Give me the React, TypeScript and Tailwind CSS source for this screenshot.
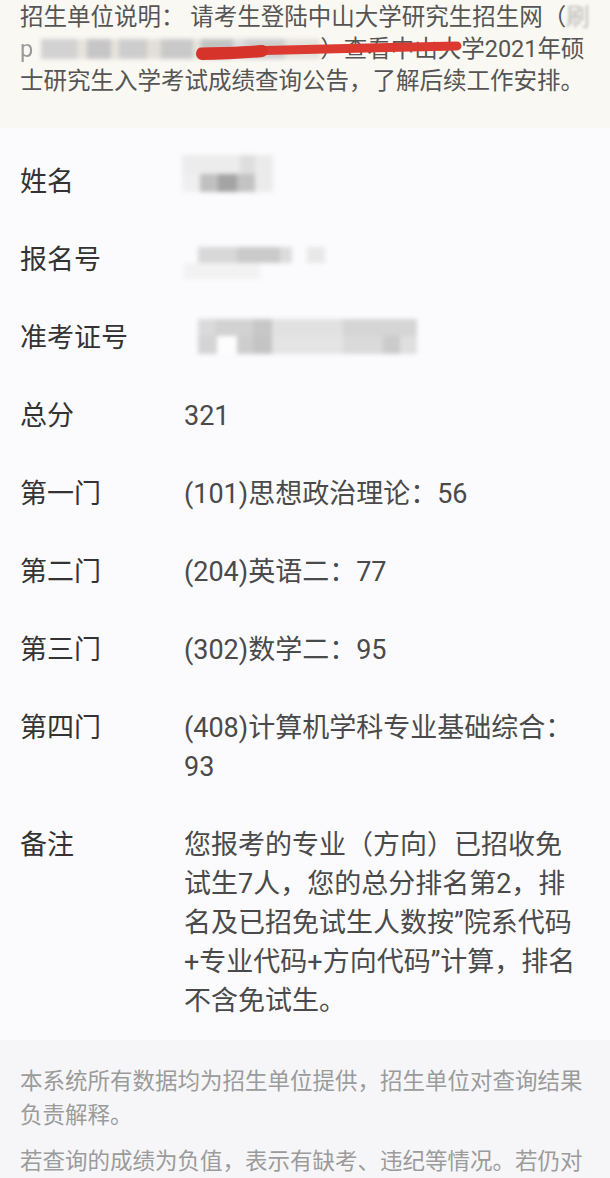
import React from 'react';

type Cell = { w: string; c: string };

const nameRows: Cell[][] = [
  [
    { w: 'w-[58px]', c: 'bg-[#ececec]' },
    { w: 'w-[15px]', c: 'bg-[#dedede]' },
    { w: 'w-[18px]', c: 'bg-[#ebebeb]' },
  ],
  [
    { w: 'w-[18px]', c: 'bg-[#efefef]' },
    { w: 'w-[18px]', c: 'bg-[#c0c0c0]' },
    { w: 'w-[19px]', c: 'bg-[#a4a4a4]' },
    { w: 'w-[18px]', c: 'bg-[#c3c3c3]' },
    { w: 'w-[18px]', c: 'bg-[#ebebeb]' },
  ],
];

const regRows: Cell[][] = [
  [
    { w: 'w-[14px]', c: 'bg-transparent' },
    { w: 'w-[39px]', c: 'bg-[#d8d8d8]' },
    { w: 'w-[43px]', c: 'bg-[#cacaca]' },
    { w: 'w-[12px]', c: 'bg-[#dcdcdc]' },
    { w: 'w-[15px]', c: 'bg-transparent' },
    { w: 'w-[18px]', c: 'bg-[#e8e8e8]' },
  ],
  [{ w: 'w-[76px]', c: 'bg-[#f2f2f2]' }],
];

const ticketRows: Cell[][] = [
  [
    { w: 'w-[14px]', c: 'bg-transparent' },
    { w: 'w-[17px]', c: 'bg-[#dadada]' },
    { w: 'w-[38px]', c: 'bg-[#d2d2d2]' },
    { w: 'w-[19px]', c: 'bg-[#c7c7c7]' },
    { w: 'w-[71px]', c: 'bg-[#e1e1e1]' },
    { w: 'w-[74px]', c: 'bg-[#d5d5d5]' },
  ],
  [
    { w: 'w-[14px]', c: 'bg-transparent' },
    { w: 'w-[19px]', c: 'bg-[#d4d4d4]' },
    { w: 'w-[20px]', c: 'bg-[#fdfdfd]' },
    { w: 'w-[16px]', c: 'bg-[#cdcdcd]' },
    { w: 'w-[19px]', c: 'bg-[#c4c4c4]' },
    { w: 'w-[71px]', c: 'bg-[#e4e4e4]' },
    { w: 'w-[40px]', c: 'bg-[#dadada]' },
    { w: 'w-[17px]', c: 'bg-[#cbcbcb]' },
    { w: 'w-[17px]', c: 'bg-[#dfdfdf]' },
  ],
];

const urlCells: Cell[] = [
  { w: 'w-[8px]', c: 'bg-transparent' },
  { w: 'w-[36px]', c: 'bg-[#d2d2d2]' },
  { w: 'w-[10px]', c: 'bg-[#e6e3dc]' },
  { w: 'w-[24px]', c: 'bg-[#c6c6c6]' },
  { w: 'w-[8px]', c: 'bg-[#e6e3dc]' },
  { w: 'w-[28px]', c: 'bg-[#cdcdcd]' },
  { w: 'w-[14px]', c: 'bg-[#e2dfd8]' },
  { w: 'w-[32px]', c: 'bg-[#c9c9c9]' },
  { w: 'w-[8px]', c: 'bg-[#e6e3dc]' },
  { w: 'w-[32px]', c: 'bg-[#c2c2c2]' },
  { w: 'w-[12px]', c: 'bg-[#dcdcdc]' },
  { w: 'w-[40px]', c: 'bg-[#cecece]' },
  { w: 'w-[35px]', c: 'bg-[#e4e1da]' },
];

const Mosaic: React.FC<{ rows: Cell[][]; h: string; className?: string }> = ({ rows, h, className }) => (
  <div className={`blur-[2px] ${className ?? ''}`}>
    {rows.map((row, i) => (
      <div key={i} className="flex">
        {row.map((cell, j) => (
          <div key={j} className={`${h} ${cell.w} ${cell.c}`} />
        ))}
      </div>
    ))}
  </div>
);

const Row: React.FC<{ label: string; children: React.ReactNode }> = ({ label, children }) => (
  <div className="flex px-5 py-[19.5px] text-[27px] leading-[39px]">
    <div className="w-[164px] shrink-0 text-[#333333]">{label}</div>
    <div className="w-[395px] text-[#4a4a4a]">{children}</div>
  </div>
);

export default function App() {
  return (
    <div className="min-h-[1178px] w-[610px] overflow-hidden bg-[#fbfbfd] font-['Roboto','Noto_Sans_CJK_SC',sans-serif]">
      {/* notice banner */}
      <div className="relative bg-[#faf8f2] px-5 pb-[31px] pt-px text-[23.5px] leading-[32px] text-[#555555]">
        <div className="whitespace-nowrap">
          招生单位说明：&nbsp;请考生登陆中山大学研究生招生网（
          <span className="inline-block text-[#b8b8b8] blur-[1.5px]">刷</span>
        </div>
        <div className="flex items-center whitespace-nowrap">
          <span className="text-[#9a9a9a] blur-[0.6px]">p</span>
          <div className="flex h-[20px] w-[287px] blur-[2px]">
            {urlCells.map((cell, i) => (
              <div key={i} className={`h-[20px] ${cell.w} ${cell.c}`} />
            ))}
          </div>
          <span>）查看中山大学2021年硕</span>
        </div>
        <div className="whitespace-nowrap">士研究生入学考试成绩查询公告，了解后续工作安排。</div>

        <svg className="pointer-events-none absolute left-0 top-0" width="610" height="80" viewBox="0 0 610 80">
          <path d="M201 52 C 270 50, 370 48, 457 46" fill="none" stroke="#dc3a31" strokeWidth="9" strokeLinecap="round" />
          <path d="M202 54 C 220 54, 240 53, 262 51" fill="none" stroke="#d6332b" strokeWidth="12" strokeLinecap="round" />
        </svg>
      </div>

      {/* result rows */}
      <div className="pt-[15px]">
        <Row label="姓名">
          <Mosaic rows={nameRows} h="h-[18.5px]" className="-ml-[2px] -mt-[7.5px]" />
        </Row>
        <Row label="报名号">
          <Mosaic rows={regRows} h="h-[16px]" className="mt-[6.5px]" />
        </Row>
        <Row label="准考证号">
          <Mosaic rows={ticketRows} h="h-[17.5px]" />
        </Row>
        <Row label="总分">321</Row>
        <Row label="第一门">(101)思想政治理论：56</Row>
        <Row label="第二门">(204)英语二：77</Row>
        <Row label="第三门">(302)数学二：95</Row>
        <Row label="第四门">(408)计算机学科专业基础综合：93</Row>
        <Row label="备注">
          您报考的专业（方向）已招收免试生7人，您的总分排名第2，排名及已招免试生人数按”院系代码+专业代码+方向代码”计算，排名不含免试生。
        </Row>
      </div>

      {/* footer notes */}
      <div className="bg-[#f6f6f8] px-5 pb-6 pt-6 text-[22.5px] leading-[34px] text-[#9b9b9b]">
        <p>本系统所有数据均为招生单位提供，招生单位对查询结果负责解释。</p>
        <p className="mt-3">若查询的成绩为负值，表示有缺考、违纪等情况。若仍对成绩有疑问，请联系招生单位。</p>
      </div>
    </div>
  );
}
